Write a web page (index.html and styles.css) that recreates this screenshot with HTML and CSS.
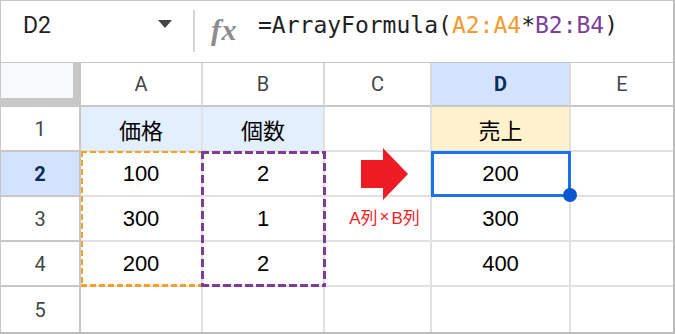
FILE: index.html
```html
<!DOCTYPE html>
<html lang="ja">
<head>
  <meta charset="UTF-8">
  <meta name="viewport" content="width=device-width, initial-scale=1.0">
  <title>ArrayFormula</title>
  <link rel="stylesheet" href="styles.css">
</head>
<body>
  <div class="sheet">
    <!-- 数式バー -->
    <div class="toolbar">
      <div class="name-box">
        <span class="cell-ref">D2</span>
        <span class="caret"></span>
      </div>
      <div class="divider"></div>
      <span class="fx">fx</span>
      <div class="formula">=ArrayFormula(<span class="ref-a">A2:A4</span>*<span class="ref-b">B2:B4</span>)</div>
    </div>

    <!-- シート -->
    <div class="grid">
      <div class="cell corner"></div>
      <div class="cell col-head">A</div>
      <div class="cell col-head">B</div>
      <div class="cell col-head">C</div>
      <div class="cell col-head active">D</div>
      <div class="cell col-head last">E</div>

      <div class="cell row-head">1</div>
      <div class="cell title-blue">価格</div>
      <div class="cell title-blue">個数</div>
      <div class="cell"></div>
      <div class="cell title-yellow">売上</div>
      <div class="cell last"></div>

      <div class="cell row-head active">2</div>
      <div class="cell">100</div>
      <div class="cell">2</div>
      <div class="cell">
        <svg class="arrow" width="47" height="52" viewBox="0 0 47 52">
          <polygon points="0,12 22,12 22,0 47,26 22,52 22,40 0,40" fill="#ed1c24"/>
        </svg>
      </div>
      <div class="cell">200</div>
      <div class="cell last"></div>

      <div class="cell row-head">3</div>
      <div class="cell">300</div>
      <div class="cell">1</div>
      <div class="cell note">A列<span class="times">×</span>B列</div>
      <div class="cell">300</div>
      <div class="cell last"></div>

      <div class="cell row-head">4</div>
      <div class="cell">200</div>
      <div class="cell">2</div>
      <div class="cell"></div>
      <div class="cell">400</div>
      <div class="cell last"></div>

      <div class="cell row-head bottom">5</div>
      <div class="cell bottom"></div>
      <div class="cell bottom"></div>
      <div class="cell bottom"></div>
      <div class="cell bottom"></div>
      <div class="cell bottom last"></div>

      <!-- 参照範囲と選択セル -->
      <div class="range range-a"></div>
      <div class="range range-b"></div>
      <div class="selection"><span class="handle"></span></div>
    </div>
  </div>
</body>
</html>
```

FILE: styles.css
```css
body { margin: 0; background: #fff; }

.sheet {
  width: 675px;
  height: 334px;
  box-sizing: border-box;
  border: 1px solid #c7c7c7;
  border-right: 2px solid #bdbdbd;
  border-bottom: 2px solid #bdbdbd;
  background: #fff;
  font-family: Roboto, "Noto Sans CJK JP", sans-serif;
  overflow: hidden;
}

/* formula bar */
.toolbar { display: flex; align-items: flex-start; height: 61px; border-bottom: 1px solid #c7c7c7; }
.name-box { width: 192px; box-sizing: border-box; padding: 11px 21px 0 22px; display: flex; justify-content: space-between; align-items: flex-start; }
.cell-ref { font-size: 23px; line-height: 27px; color: #1f1f1f; }
.caret { width: 0; height: 0; border-left: 7.5px solid transparent; border-right: 7.5px solid transparent; border-top: 8px solid #444; margin-top: 8px; }
.divider { width: 2px; height: 42px; background: #d5d5d5; margin-top: 9px; }
.fx { width: 29px; margin: 14px 0 0 16px; font: italic 700 30px/30px "Liberation Serif", serif; color: #8d8d8d; letter-spacing: 0.5px; white-space: nowrap; }
.formula { margin-left: 18px; padding-top: 11px; font: 23px/27px "DejaVu Sans Mono", monospace; color: #1f1f1f; white-space: nowrap; }
.ref-a { color: #f39a2e; }
.ref-b { color: #7b3f99; }

/* grid */
.grid {
  position: relative;
  display: grid;
  grid-template-columns: 80px 122px 122px 107px 139px 102px;
  grid-template-rows: 44px repeat(5, 45px);
}
.cell {
  box-sizing: border-box;
  border-right: 2px solid #e1e1e1;
  border-bottom: 2px solid #e1e1e1;
  display: flex;
  align-items: center;
  justify-content: center;
  font-family: "Liberation Sans", "Noto Sans CJK JP", sans-serif;
  font-size: 22px;
  color: #000;
}
.cell.last { border-right: none; }
.cell.bottom { border-bottom: none; }
.corner { background: #f8f9fa; border-right: 8px solid #c7c7c7; border-bottom: 9px solid #c7c7c7; }
.col-head { font-family: Roboto, sans-serif; font-size: 20px; color: #444746; border-right-color: #dadada; border-bottom-color: #c7c7c7; }
.row-head { font-family: Roboto, sans-serif; font-size: 20px; color: #444746; border-right-color: #c7c7c7; border-bottom-color: #c7c7c7; }
.col-head.active, .row-head.active { background: #d3e3fd; color: #0b2b5c; font-weight: 700; }
.title-blue { background: #e3effd; }
.title-yellow { background: #fff2cc; }

.arrow { flex-shrink: 0; margin-left: 13px; }
.note { color: #ee1d26; font-size: 17px; padding: 0 0 4px 14px; }
.times { margin: 0 2px; }

/* overlays */
.range { position: absolute; pointer-events: none; }
.range-a {
  grid-column: 2 / 3;
  grid-row: 3 / 6;
  inset: -1px 0 0 0;
  background:
    repeating-linear-gradient(90deg, #f4a12b 0 6px, transparent 6px 9px) top left / 100% 2px no-repeat,
    repeating-linear-gradient(90deg, #f4a12b 0 6px, transparent 6px 9px) bottom left / 100% 3px no-repeat,
    repeating-linear-gradient(180deg, #f4a12b 0 6px, transparent 6px 9px) top left / 2px 100% no-repeat;
}
.range-b {
  grid-column: 3 / 4;
  grid-row: 3 / 6;
  inset: -1px -1px 0 -2px;
  background:
    repeating-linear-gradient(90deg, #7d3c98 0 8px, transparent 8px 11px) top left / 100% 3px no-repeat,
    repeating-linear-gradient(90deg, #7d3c98 0 8px, transparent 8px 11px) bottom left / 100% 3px no-repeat,
    repeating-linear-gradient(180deg, #7d3c98 0 8px, transparent 8px 12px) top left / 3px 100% no-repeat,
    repeating-linear-gradient(180deg, #7d3c98 0 8px, transparent 8px 12px) top right / 3px 100% no-repeat;
}
.selection {
  position: absolute;
  grid-column: 5 / 6;
  grid-row: 3 / 4;
  inset: -1px 0 0 -1px;
  border: 3px solid #1a73e8;
}
.handle { position: absolute; right: -9px; bottom: -8px; width: 14px; height: 14px; border-radius: 50%; background: #0b57d0; }
```
